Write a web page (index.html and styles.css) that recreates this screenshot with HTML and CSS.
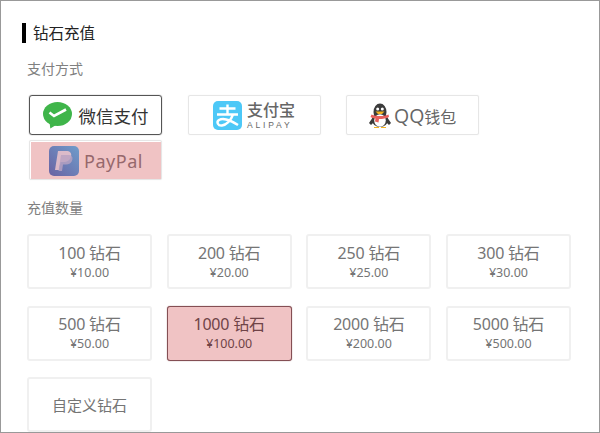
FILE: index.html
```html
<!DOCTYPE html>
<html lang="zh-CN">

<head>
    <meta charset="UTF-8">
    <meta name="viewport" content="width=device-width, initial-scale=1.0">
    <title>钻石充值</title>
    <link rel="stylesheet" href="styles.css">
</head>

<body>
    <div class="recharge">
        <h2 class="title">钻石充值</h2>

        <p class="label">支付方式</p>
        <ul class="pays">
            <li class="pay selected">
                <svg class="ico-wechat" viewBox="0 0 29 27">
                    <ellipse cx="14.5" cy="12" rx="14.5" ry="12" fill="#3fb54a" />
                    <path d="M6.5 20l.8 6.5 6.5-4z" fill="#3fb54a" />
                    <path d="M6.5 10.5l4.5 3.5L23 7.5" fill="none" stroke="#fff" stroke-width="2.6" />
                </svg>
                <span class="pay-wechat">微信支付</span>
            </li>
            <li class="pay">
                <svg class="ico-alipay" viewBox="0 0 29 29">
                    <rect width="29" height="29" rx="5" fill="#4dc8f7" />
                    <path d="M14.5 3.5v10M6.5 7.500h16M4 13.500h21M20 13.500c-2 6-7 10.500-11 11-4 .5-6-3.500-3-5.500 3-2 10-1 19 5" fill="none" stroke="#fff" stroke-width="2.400" />
                </svg>
                <span class="pay-alipay">
                    <b>支付宝</b>
                    <i>ALIPAY</i>
                </span>
            </li>
            <li class="pay">
                <svg class="ico-qq" viewBox="0 0 22 25">
                    <ellipse cx="11" cy="9" rx="6.500" ry="8.500" fill="#3b3b3b" />
                    <ellipse cx="11" cy="17" rx="8" ry="7" fill="#3b3b3b" />
                    <path d="M4 14l-4 6 2 2 3-3zM18 14l4 6-2 2-3-3z" fill="#3b3b3b" />
                    <ellipse cx="11" cy="17.500" rx="5.800" ry="6.200" fill="#fff" />
                    <circle cx="8.700" cy="6" r="1.500" fill="#fff" />
                    <circle cx="13.300" cy="6" r="1.500" fill="#fff" />
                    <path d="M6.500 8.500h9L13 11H9z" fill="#f5b31f" />
                    <path d="M2.500 11.500c5 2 12 2 17 0l.5 2.500c-3 1.500-6 2-10 2l-.5 3.500-3.500-1 .5-3c-2-.3-4-.8-5-1.500z" fill="#e8605c" />
                    <path d="M5 24h5v1H5zM12 24h5v1h-5z" fill="#f5b31f" />
                </svg>
                <span class="pay-qq"><em>QQ</em>钱包</span>
            </li>
            <li class="pay paypal">
                <div class="paypal-inner">
                    <svg class="ico-paypal" viewBox="0 0 30 30">
                        <defs>
                            <linearGradient id="ppbg" x1="1" y1="0" x2="0" y2="1">
                                <stop offset="0" stop-color="#6f9ccb" />
                                <stop offset="1" stop-color="#6a62a2" />
                            </linearGradient>
                        </defs>
                        <rect width="30" height="30" rx="5" fill="url(#ppbg)" />
                        <path d="M9 5h8c4 0 6 2 5 5.500-1 4-4 5.500-7.500 5.500h-3L10 24H6z" fill="#eec4cb" opacity=".85" />
                        <path d="M12 9h7c4 0 5 2 4.300 5-.8 3-3.300 4.500-6.300 4.500h-3L13 25H9.500z" fill="#b9a3c2" opacity=".8" />
                    </svg>
                    <span class="pay-paypal">PayPal</span>
                </div>
            </li>
        </ul>

        <p class="label label-amount">充值数量</p>
        <ul class="amounts">
            <li class="amount"><strong>100 钻石</strong><span>¥10.00</span></li>
            <li class="amount"><strong>200 钻石</strong><span>¥20.00</span></li>
            <li class="amount"><strong>250 钻石</strong><span>¥25.00</span></li>
            <li class="amount"><strong>300 钻石</strong><span>¥30.00</span></li>
            <li class="amount"><strong>500 钻石</strong><span>¥50.00</span></li>
            <li class="amount selected"><strong>1000 钻石</strong><span>¥100.00</span></li>
            <li class="amount"><strong>2000 钻石</strong><span>¥200.00</span></li>
            <li class="amount"><strong>5000 钻石</strong><span>¥500.00</span></li>
            <li class="amount custom">自定义钻石</li>
        </ul>
    </div>
</body>

</html>
```

FILE: styles.css
```css
* {
    margin: 0;
    padding: 0;
    list-style: none;
    box-sizing: border-box;
}

body {
    font-family: "Noto Sans", "Noto Sans CJK SC", sans-serif;
    background: #fff;
}

.recharge {
    width: 600px;
    height: 433px;
    padding: 22px 0 0 21px;
    border: 1px solid #999;
    overflow: hidden;
}

.title {
    height: 20px;
    padding-left: 7px;
    border-left: 4px solid #000;
    font-size: 15.500px;
    font-weight: 400;
    line-height: 20px;
    color: #222;
}

.label {
    height: 20px;
    margin: 16px 0 16px 5px;
    font-size: 14px;
    line-height: 20px;
    color: #808080;
}

.label-amount {
    margin-top: 18px;
}

.pays {
    display: grid;
    grid-template-columns: repeat(3, 133px);
    gap: 5px 25.600px;
    margin-left: 7px;
}

.pay {
    display: flex;
    align-items: center;
    justify-content: center;
    height: 40px;
    border: 1px solid #e6e6e6;
    border-radius: 2px;
    box-shadow: 0 0 1px #e6e6e6;
}

.pay.selected {
    border-color: #555;
    border-radius: 3px;
    box-shadow: 0 0 1px #555;
}

.ico-wechat {
    width: 29px;
    height: 27px;
    margin-right: 7px;
}

.pay-wechat {
    font-size: 17.500px;
    color: #333;
}

.ico-alipay {
    width: 29px;
    height: 29px;
    margin: 1px 5px 0 0;
}

.pay-alipay {
    display: flex;
    flex-direction: column;
    color: #666;
}

.pay-alipay b {
    font-size: 16px;
    line-height: 18px;
    font-weight: 500;
}

.pay-alipay i {
    margin-top: 2px;
    font-family: "Liberation Sans", sans-serif;
    font-size: 8.500px;
    font-style: normal;
    line-height: 8px;
    letter-spacing: 2.800px;
}

.ico-qq {
    width: 22px;
    height: 25px;
    margin-right: 3px;
}

.pay-qq {
    font-size: 16px;
    color: #666;
}

.pay-qq em {
    font-family: "Open Sans", sans-serif;
    font-size: 19.500px;
    font-style: normal;
    font-weight: 400;
}

.paypal {
    align-items: stretch;
}

.paypal-inner {
    display: flex;
    align-items: center;
    justify-content: center;
    flex: 1;
    margin-top: 1px;
    margin-left: 1px;
    background: #f0c3c4;
}

.ico-paypal {
    width: 30px;
    height: 30px;
    margin-right: 5px;
}

.pay-paypal {
    font-size: 18px;
    letter-spacing: .5px;
    color: #96686c;
}

.amounts {
    display: grid;
    grid-template-columns: repeat(4, 125px);
    grid-auto-rows: 55px;
    gap: 16.500px 14.670px;
    margin-left: 5px;
}

.amount {
    display: flex;
    flex-direction: column;
    align-items: center;
    justify-content: center;
    border: 2px solid #f0f0f0;
    border-radius: 3px;
    color: #757575;
}

.amount strong {
    font-size: 16px;
    font-weight: 400;
    line-height: 20px;
    letter-spacing: -.2px;
}

.amount span {
    margin-top: 1px;
    font-size: 12.500px;
    line-height: 17px;
}

.amount.selected {
    background: #f0c3c4;
    border: 1px solid #844f54;
    box-shadow: 0 0 1px #844f54;
    color: #6f4347;
}

.amount.custom {
    font-size: 15px;
}
```
